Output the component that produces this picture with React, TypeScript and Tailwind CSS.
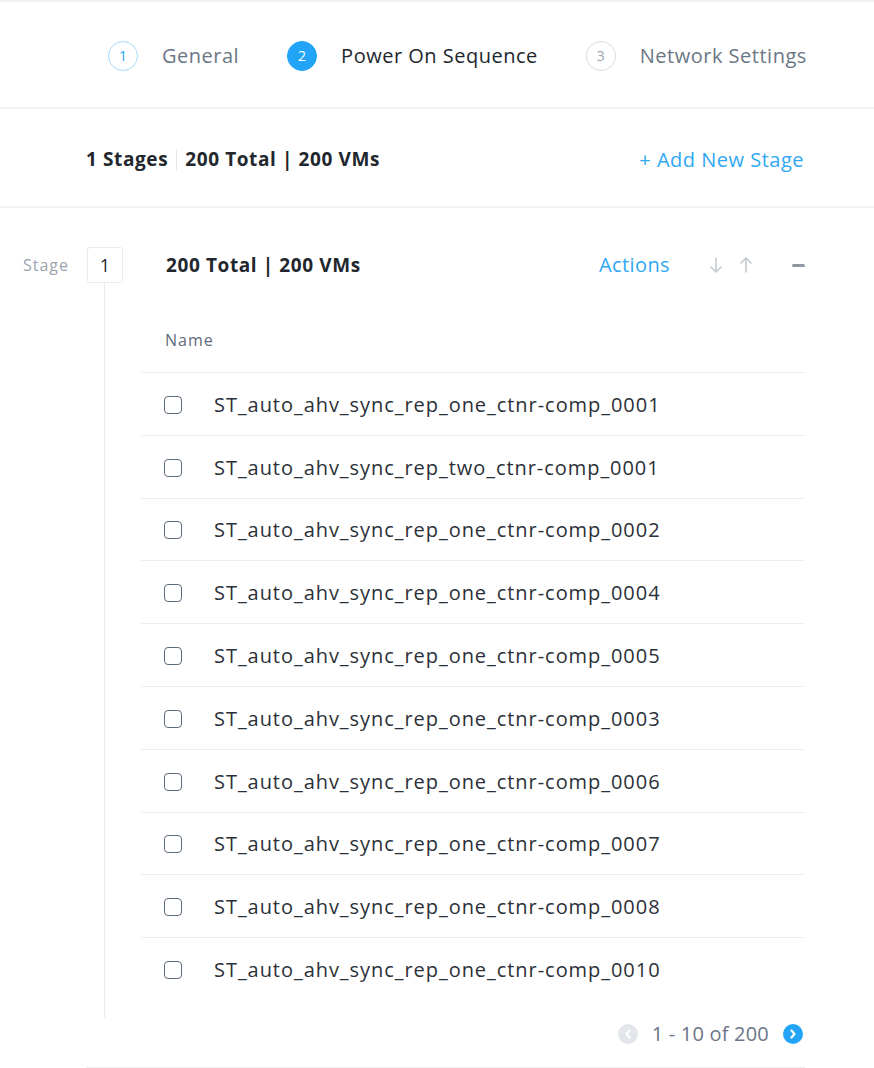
import React from 'react';

const VMS = [
  'ST_auto_ahv_sync_rep_one_ctnr-comp_0001',
  'ST_auto_ahv_sync_rep_two_ctnr-comp_0001',
  'ST_auto_ahv_sync_rep_one_ctnr-comp_0002',
  'ST_auto_ahv_sync_rep_one_ctnr-comp_0004',
  'ST_auto_ahv_sync_rep_one_ctnr-comp_0005',
  'ST_auto_ahv_sync_rep_one_ctnr-comp_0003',
  'ST_auto_ahv_sync_rep_one_ctnr-comp_0006',
  'ST_auto_ahv_sync_rep_one_ctnr-comp_0007',
  'ST_auto_ahv_sync_rep_one_ctnr-comp_0008',
  'ST_auto_ahv_sync_rep_one_ctnr-comp_0010',
];

function Step({ n, label, state }: { n: number; label: string; state: 'done' | 'active' | 'todo' }) {
  const circle =
    state === 'active'
      ? 'bg-[#22a5f7] text-white border-[#22a5f7]'
      : state === 'done'
        ? 'border-[#a9d9fa] text-[#22a5f7]'
        : 'border-[#d9dde2] text-[#9aa3ad]';
  const text = state === 'active' ? 'text-[#22272e]' : 'text-[#6b7685]';
  return (
    <div className="flex items-center">
      <div className={`w-[30px] h-[30px] rounded-full border flex items-center justify-center text-[14px] ${circle}`}>
        {n}
      </div>
      <span className={`ml-[24px] text-[20px] tracking-[0.5px] ${text}`}>{label}</span>
    </div>
  );
}

export default function App() {
  return (
    <div className="w-[874px] min-h-[1068px] bg-white font-['Open_Sans',sans-serif] border-t-2 border-[#f0f1f2]">
      {/* wizard steps */}
      <div className="h-[107px] flex items-center pl-[108px] gap-[48px] border-b-2 border-[#f2f3f4] pt-[2px]">
        <Step n={1} label="General" state="done" />
        <Step n={2} label="Power On Sequence" state="active" />
        <Step n={3} label="Network Settings" state="todo" />
      </div>

      {/* summary */}
      <div className="h-[99px] flex items-center justify-between pl-[86px] pr-[70px] pt-[4px] border-b-2 border-[#f2f3f4]">
        <div className="flex items-center text-[19px] font-bold tracking-[0.6px] text-[#22272e]">
          <span>1 Stages</span>
          <span className="mx-[8px] w-px h-[22px] bg-[#e4e6e9]" />
          <span>200 Total | 200 VMs</span>
        </div>
        <span className="text-[20px] tracking-[0.5px] text-[#2fa8f5]">+ Add New Stage</span>
      </div>

      {/* stage */}
      <div className="flex pt-[39px]">
        <div className="w-[86px] pl-[23px] h-[36px] flex items-center">
          <span className="text-[16px] tracking-[1px] text-[#9aa3ad]">Stage</span>
        </div>
        <div className="w-[719px] border-b border-[#eceef0] flex">
          <div className="w-[55px] flex flex-col">
            <div className="ml-[1px] w-[36px] h-[36px] border border-[#e8eaed] rounded-[3px] flex items-center justify-center text-[18px] text-[#22272e]">
              1
            </div>
            <div className="ml-[18px] w-px h-[735px] bg-[#e8eaed]" />
          </div>
          <div className="flex-1">
            <div className="h-[36px] flex items-center justify-between pl-[25px]">
              <span className="text-[19px] font-bold tracking-[0.6px] text-[#22272e]">200 Total | 200 VMs</span>
              <div className="flex items-center">
                <span className="text-[20px] tracking-[0.4px] text-[#2fa8f5]">Actions</span>
                <svg className="ml-[38px]" width="16" height="18" viewBox="0 0 16 18" fill="none" stroke="#c5cad0" strokeWidth="1.6" strokeLinecap="round" strokeLinejoin="round">
                  <path d="M8 2v14M3 11l5 5 5-5" />
                </svg>
                <svg className="ml-[14px]" width="16" height="18" viewBox="0 0 16 18" fill="none" stroke="#c5cad0" strokeWidth="1.6" strokeLinecap="round" strokeLinejoin="round">
                  <path d="M8 16V2M3 7l5-5 5 5" />
                </svg>
                <span className="ml-[38px] w-[13px] h-[3px] bg-[#8e97a2] rounded-sm" />
              </div>
            </div>
            <div className="h-[89px] flex items-end pb-[20px] pl-[24px]">
              <span className="text-[16px] tracking-[1px] text-[#5f6b7a]">Name</span>
            </div>
            {VMS.map((vm) => (
              <div key={vm} className="h-[62.8px] flex items-center pl-[23px] pt-[2px] border-t border-[#eceef0]">
                <span className="w-[18px] h-[18px] rounded-[4px] border-[1.5px] border-[#5d6b7c]" />
                <span className="ml-[32px] text-[20px] tracking-[0.95px] text-[#2b3038]">{vm}</span>
              </div>
            ))}
            <div className="h-[67px] flex items-center justify-end pt-[2px] pr-[2px]">
              <span className="w-[20px] h-[20px] rounded-full bg-[#e2e5e9] flex items-center justify-center">
                <svg width="8" height="10" viewBox="0 0 8 10" fill="none" stroke="white" strokeWidth="2.2" strokeLinecap="round" strokeLinejoin="round">
                  <path d="M5.5 1.5L2.5 5l3 3.5" />
                </svg>
              </span>
              <span className="ml-[14px] text-[20px] tracking-[0.2px] text-[#6b7685]">1 - 10 of 200</span>
              <span className="ml-[14px] w-[20px] h-[20px] rounded-full bg-[#22a5f7] flex items-center justify-center">
                <svg width="8" height="10" viewBox="0 0 8 10" fill="none" stroke="white" strokeWidth="2.2" strokeLinecap="round" strokeLinejoin="round">
                  <path d="M2.5 1.5L5.5 5l-3 3.5" />
                </svg>
              </span>
            </div>
          </div>
        </div>
      </div>
    </div>
  );
}
